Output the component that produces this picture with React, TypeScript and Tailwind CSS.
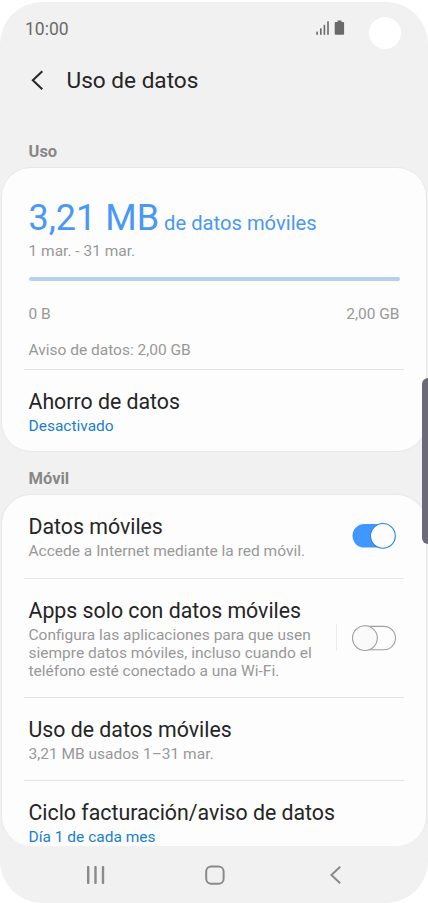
import { useState } from 'react';

interface SwitchProps {
  checked: boolean;
  label: string;
  onChange: (value: boolean) => void;
}

interface SettingRowProps {
  title: string;
  subtitle: string;
  accent?: boolean;
}

function Switch({ checked, label, onChange }: SwitchProps) {
  return (
    <button
      role="switch"
      aria-checked={checked}
      aria-label={label}
      onClick={() => onChange(!checked)}
      className="flex shrink-0"
    >
      <svg width="46" height="28" viewBox="0 0 46 28" fill="none">
        {checked ? (
          <>
            <rect x="1.5" y="2" width="42" height="23.6" rx="11.8" fill="#4297ff" />
            <circle cx="31.9" cy="13.9" r="12.4" fill="#fcfcfc" stroke="#2384da" strokeWidth="1.1" />
          </>
        ) : (
          <>
            <rect x="2" y="2.4" width="42.5" height="23.4" rx="11.7" stroke="#a0a0a0" strokeWidth="1.1" />
            <circle cx="13.9" cy="14.1" r="12.4" fill="#fafafa" stroke="#a0a0a0" strokeWidth="1.1" />
          </>
        )}
      </svg>
    </button>
  );
}

function SettingRow({ title, subtitle, accent }: SettingRowProps) {
  return (
    <div className="px-[4.5px]">
      <h3 className="text-[21.3px] leading-[26px] text-[#252525]">{title}</h3>
      <p className={`text-[15.5px] leading-[23px] ${accent ? 'text-[#1a7fd0]' : 'text-[#989898]'}`}>
        {subtitle}
      </p>
    </div>
  );
}

export default function App() {
  const [mobileData, setMobileData] = useState(true);
  const [mobileOnly, setMobileOnly] = useState(false);

  return (
    <div className="w-[428px] h-[903px] pt-[2px] bg-white overflow-hidden font-['Roboto',sans-serif]">
      <div className="relative flex flex-col h-[901px] bg-[#f1f1f1] rounded-[42px] overflow-hidden">
        {/* Status bar */}
        <div className="flex items-center h-[54px] pl-[25px] pr-[82px]">
          <span className="text-[17.5px] leading-[20px] text-[#6b6b6b]">10:00</span>
          <svg className="ml-auto -mt-[2px]" width="30" height="16" viewBox="0 0 30 16" fill="#696969">
            <rect x="0.3" y="11.6" width="1.6" height="3.2" />
            <rect x="4" y="8.3" width="1.6" height="6.5" />
            <rect x="7.6" y="4.8" width="1.6" height="10" />
            <rect x="11.2" y="1.3" width="1.6" height="13.5" />
            <path d="M21.6 0.4h3.9v1.7h1.6a1 1 0 0 1 1 1v10.7a1 1 0 0 1-1 1h-7.4a1 1 0 0 1-1-1V3.1a1 1 0 0 1 1-1h1.9z" />
          </svg>
        </div>
        {/* Camera hole */}
        <div className="absolute left-[369px] top-[15px] size-8 rounded-full bg-white" />

        {/* Header */}
        <header className="flex items-center h-[50px] pl-[30px]">
          <svg className="mb-[3px]" width="14" height="20" viewBox="0 0 14 20" fill="none" stroke="#252525" strokeWidth="2">
            <path d="M12.3 1.2L2.8 10.2l9.5 9" />
          </svg>
          <h1 className="ml-[22.5px] mb-px text-[22.6px] leading-[28px] text-[#252525]">Uso de datos</h1>
        </header>

        <h2 className="mt-[34px] pl-[28.5px] text-[16.5px] leading-[24px] font-bold text-[#888888]">Uso</h2>

        {/* Usage */}
        <section className="mt-[3px] mx-px h-[285px] shrink-0 px-[22px] bg-[#fdfdfd] rounded-[30px] border border-[#e8e8e8]">
          <div className="px-[4.5px]">
            <p className="pt-[29px] h-[71px] whitespace-nowrap text-[#4a98f5]">
              <span className="text-[36px] leading-[42px]">3,21 MB</span>
              <span className="ml-[5px] text-[20.2px]">de datos móviles</span>
            </p>
            <p className="text-[15.5px] leading-[24px] text-[#989898]">1 mar. - 31 mar.</p>
            <div className="mt-[14px] h-[4px] rounded-full bg-[#b3d0ec]" />
            <div className="mt-[21px] flex justify-between text-[15.5px] leading-[24px] text-[#989898]">
              <span>0 B</span>
              <span>2,00 GB</span>
            </div>
            <p className="mt-[12px] text-[15.5px] leading-[24px] text-[#989898]">Aviso de datos: 2,00 GB</p>
          </div>
          <div className="mt-[7px] mb-[19px] h-px bg-[#e4e4e4]" />
          <SettingRow title="Ahorro de datos" subtitle="Desactivado" accent />
        </section>

        <h2 className="mt-[15px] pl-[28.5px] text-[16.5px] leading-[24px] font-bold text-[#888888]">Móvil</h2>

        {/* Mobile */}
        <section className="mt-[3px] mx-px h-[352px] shrink-0 overflow-hidden px-[22px] pt-[19px] bg-[#fdfdfd] rounded-[30px] border border-b-0 border-[#e8e8e8]">
          <div className="flex items-start justify-between pr-[7px]">
            <SettingRow title="Datos móviles" subtitle="Accede a Internet mediante la red móvil." />
            <div className="mt-[8px]">
              <Switch checked={mobileData} label="Datos móviles" onChange={setMobileData} />
            </div>
          </div>
          <div className="mt-[15px] mb-[19px] h-px bg-[#e8e8e8]" />

          <div className="flex items-center pr-[7px]">
            <div className="px-[4.5px] flex-1 whitespace-nowrap">
              <h3 className="text-[21.3px] leading-[26px] text-[#252525]">Apps solo con datos móviles</h3>
              <p className="mt-[2px] text-[15.5px] leading-[18.2px] text-[#989898]">
                Configura las aplicaciones para que usen<br />
                siempre datos móviles, incluso cuando el<br />
                teléfono esté conectado a una Wi-Fi.
              </p>
            </div>
            <div className="mr-[14px] -mt-[3px] h-[27px] w-px bg-[#ececec]" />
            <div className="-mt-[3px]">
              <Switch checked={mobileOnly} label="Apps solo con datos móviles" onChange={setMobileOnly} />
            </div>
          </div>
          <div className="mt-[16px] mb-[19px] h-px bg-[#e4e4e4]" />

          <SettingRow title="Uso de datos móviles" subtitle="3,21 MB usados 1–31 mar." />
          <div className="mt-[14.4px] mb-[18.6px] h-px bg-[#e4e4e4]" />

          <SettingRow title="Ciclo facturación/aviso de datos" subtitle="Día 1 de cada mes" accent />
        </section>

        {/* Edge panel handle */}
        <div className="absolute right-0 top-[376px] h-[166px] w-[6px] rounded-l-[6px] bg-[#6d6a78]" />

        {/* Navigation bar */}
        <nav className="flex h-[57px] items-center justify-between pl-[86px] pr-[86px]">
          <svg width="20" height="20" viewBox="0 0 20 20" fill="#8a8a8a">
            <rect x="1" y="1" width="2.4" height="18" rx="0.8" />
            <rect x="8.3" y="1" width="2.4" height="18" rx="0.8" />
            <rect x="15.8" y="1" width="2.4" height="18" rx="0.8" />
          </svg>
          <svg className="-ml-[5px]" width="20" height="20" viewBox="0 0 20 20" fill="none" stroke="#8a8a8a" strokeWidth="2">
            <rect x="1.2" y="1.4" width="17.4" height="17.4" rx="5" />
          </svg>
          <svg width="13" height="20" viewBox="0 0 13 20" fill="none" stroke="#8a8a8a" strokeWidth="2">
            <path d="M11.2 1.7L2.4 10l8.8 8.3" />
          </svg>
        </nav>
      </div>
    </div>
  );
}
